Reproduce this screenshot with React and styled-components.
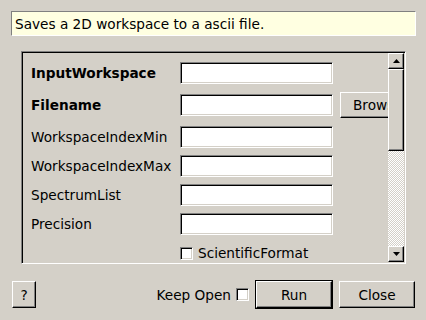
import React from "react";
import styled, { createGlobalStyle, css } from "styled-components";

const Global = createGlobalStyle`
  html, body { margin: 0; padding: 0; background: #d4d0c8; }
  body { font-family: "DejaVu Sans", "Liberation Sans", sans-serif; font-size: 13.65px; color: #000; }
  #root { width: 426px; height: 320px; overflow: hidden; }
`;

const sunken = css`
  border: 1px solid;
  border-color: #808080 #ffffff #ffffff #808080;
  box-shadow: inset 1px 1px 0 #000000, inset -1px -1px 0 #d4d0c8;
`;

const raised = css`
  border: 1px solid;
  border-color: #ffffff #000000 #000000 #ffffff;
  box-shadow: inset -1px -1px 0 #808080;
  background: #d4d0c8;
`;

const Page = styled.div`
  display: flex;
  flex-direction: column;
  padding: 11px 10px 0 11px;
  height: 320px;
  box-sizing: border-box;
`;

const Description = styled.div`
  height: 25px;
  box-sizing: border-box;
  border: 1px solid;
  border-color: #808080 #ffffff #ffffff #808080;
  background: #ffffe1;
  padding: 0 3px;
  display: flex;
  align-items: center;
  white-space: nowrap;
`;

const Frame = styled.div`
  margin: 15px 10px 0 10px;
  height: 213px;
  box-sizing: border-box;
  ${sunken};
  padding: 1px;
  display: flex;
`;

const Viewport = styled.div`
  flex: 1;
  overflow: hidden;
  padding: 9px 0 0 8px;
`;

const Rows = styled.div`
  display: flex;
  flex-direction: column;
  width: 420px;
`;

const Row = styled.div`
  display: flex;
  align-items: center;
  height: 22px;
  margin-bottom: ${(p) => p.$gap}px;
`;

const Label = styled.div`
  width: 149px;
  flex: none;
  white-space: nowrap;
  font-weight: ${(p) => (p.$bold ? 700 : 400)};
`;

const Input = styled.div`
  width: 153px;
  height: 22px;
  flex: none;
  box-sizing: border-box;
  background: #fff;
  ${sunken};
`;

const Button = styled.div`
  box-sizing: border-box;
  ${raised};
  display: flex;
  align-items: center;
  justify-content: center;
  flex: none;
  width: ${(p) => p.$w}px;
  height: ${(p) => p.$h || 27}px;
  white-space: nowrap;
  overflow: hidden;
`;

const DefaultWrap = styled.div`
  border: 1px solid #000;
  flex: none;
  display: flex;
`;

const BrowseButton = styled(Button)`
  margin-left: 7px;
  height: 26px;
  justify-content: flex-start;
  padding-left: 12px;
`;

const CloseButton = styled(Button)`
  margin-left: 6px;
`;

const Check = styled.div`
  width: 13px;
  height: 13px;
  box-sizing: border-box;
  background: #fff;
  flex: none;
  ${sunken};
`;

const CheckRow = styled(Row)`
  padding-left: 149px;
  gap: 5px;
`;

const ScrollBar = styled.div`
  width: 16px;
  flex: none;
  display: flex;
  flex-direction: column;
`;

const Arrow = styled.div`
  box-sizing: border-box;
  ${raised};
  width: 16px;
  height: 16px;
  flex: none;
  display: flex;
  align-items: center;
  justify-content: center;
`;

const Handle = styled.div`
  box-sizing: border-box;
  ${raised};
  height: 82px;
  flex: none;
`;

const Trough = styled.div`
  flex: 1;
  background: repeating-conic-gradient(#ffffff 0 25%, #d4d0c8 0 50%) 0 0 / 2px 2px;
`;

const BottomBar = styled.div`
  display: flex;
  align-items: center;
  margin: 16px 1px 0 1px;
  height: 29px;
`;

const Spacer = styled.div`
  flex: 1;
`;

const KeepOpen = styled.div`
  display: flex;
  align-items: center;
  gap: 5px;
  margin-right: 6px;
`;

const TriUp = () => (
  <svg width="7" height="4" viewBox="0 0 7 4">
    <polygon points="3.5,0 7,4 0,4" fill="#000" />
  </svg>
);
const TriDown = () => (
  <svg width="7" height="4" viewBox="0 0 7 4">
    <polygon points="0,0 7,0 3.5,4" fill="#000" />
  </svg>
);

export default function App() {
  return (
    <>
      <Global />
      <Page>
        <Description>Saves a 2D workspace to a ascii file.</Description>
        <Frame>
          <Viewport>
            <Rows>
              <Row $gap={10}>
                <Label $bold>InputWorkspace</Label>
                <Input />
              </Row>
              <Row $gap={10}>
                <Label $bold>Filename</Label>
                <Input />
                <BrowseButton $w={80}>Browse</BrowseButton>
              </Row>
              <Row $gap={7}>
                <Label>WorkspaceIndexMin</Label>
                <Input />
              </Row>
              <Row $gap={7}>
                <Label>WorkspaceIndexMax</Label>
                <Input />
              </Row>
              <Row $gap={7}>
                <Label>SpectrumList</Label>
                <Input />
              </Row>
              <Row $gap={7}>
                <Label>Precision</Label>
                <Input />
              </Row>
              <CheckRow $gap={0}>
                <Check />
                <span>ScientificFormat</span>
              </CheckRow>
            </Rows>
          </Viewport>
          <ScrollBar>
            <Arrow><TriUp /></Arrow>
            <Handle />
            <Trough />
            <Arrow><TriDown /></Arrow>
          </ScrollBar>
        </Frame>
        <BottomBar>
          <Button $w={24}>?</Button>
          <Spacer />
          <KeepOpen>
            <span>Keep Open</span>
            <Check />
          </KeepOpen>
          <DefaultWrap>
            <Button $w={76}>Run</Button>
          </DefaultWrap>
          <CloseButton $w={76}>Close</CloseButton>
        </BottomBar>
      </Page>
    </>
  );
}
